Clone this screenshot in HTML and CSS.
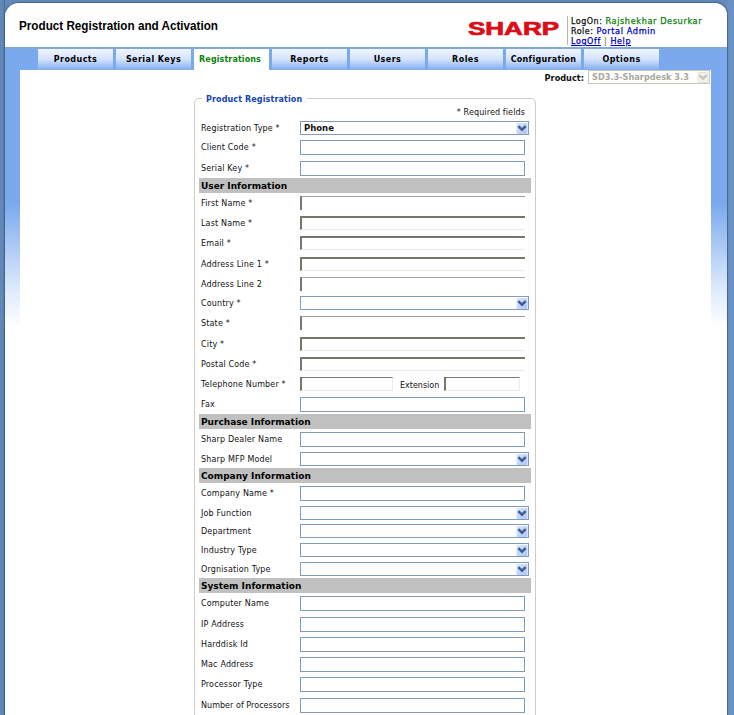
FILE: index.html
```html
<!DOCTYPE html>
<html lang="en">
<head>
<meta charset="utf-8">
<title>Product Registration and Activation</title>
<link rel="stylesheet" href="styles.css">
</head>
<body>
<svg width="0" height="0" class="defs">
  <defs>
    <linearGradient id="btn" x1="0" y1="0" x2="1" y2="1"><stop offset="0" stop-color="#d9e6fe"/><stop offset="1" stop-color="#adc6f7"/></linearGradient>
    <symbol id="drop" viewBox="0 0 11 11"><rect width="11" height="11" rx="1" fill="url(#btn)"/><path d="M1.8 3.2 5.5 6.7 9.2 3.2" fill="none" stroke="#3f5c98" stroke-width="2.5"/></symbol>
    <symbol id="drop-off" viewBox="0 0 11 11"><rect x=".5" y=".5" width="10" height="10" rx="1" fill="#f3f2ea" stroke="#e2e1d8"/><path d="M1.8 3.2 5.5 6.7 9.2 3.2" fill="none" stroke="#c5c4b6" stroke-width="2.3"/></symbol>
  </defs>
</svg>
<div class="shell">
  <header class="top">
    <svg class="title" width="220" height="20"><text x="0" y="13" textLength="199" lengthAdjust="spacingAndGlyphs">Product Registration and Activation</text></svg>
    <svg class="logo" width="93" height="18"><text x="0" y="14.5" textLength="91" lengthAdjust="spacingAndGlyphs">SHARP</text></svg>
    <div class="account">
      <div>LogOn: <b class="green">Rajshekhar Desurkar</b></div>
      <div>Role: <b class="blue">Portal Admin</b></div>
      <div class="links"><a href="#">LogOff</a> <i>|</i> <a href="#">Help</a></div>
    </div>
  </header>
  <nav class="tabs">
    <a>Products</a><a>Serial Keys</a><a class="active">Registrations</a><a>Reports</a><a>Users</a><a>Roles</a><a class="wide">Configuration</a><a>Options</a>
  </nav>
  <main>
    <div class="product"><span>Product:</span><div class="product-select"><span>SD3.3-Sharpdesk 3.3</span><svg width="12" height="11"><use href="#drop-off" width="12" height="11"/></svg></div></div>
    <section class="panel">
      <h2>Product Registration</h2>
      <p class="required">* Required fields</p>
      <div class="row h19"><label>Registration Type *</label><div class="select"><span>Phone</span><svg width="12" height="11"><use href="#drop"/></svg></div></div>
      <div class="row h21"><label>Client Code *</label><div class="field"></div></div>
      <div class="row h17"><label>Serial Key *</label><div class="field"></div></div>
      <h3>User Information</h3>
      <div class="row h20"><label>First Name *</label><div class="inset light"></div></div>
      <div class="row h20"><label>Last Name *</label><div class="inset"></div></div>
      <div class="row h21"><label>Email *</label><div class="inset"></div></div>
      <div class="row h20"><label>Address Line 1 *</label><div class="inset"></div></div>
      <div class="row h19"><label>Address Line 2</label><div class="inset light"></div></div>
      <div class="row h20"><label>Country *</label><div class="select"><span></span><svg width="12" height="11"><use href="#drop"/></svg></div></div>
      <div class="row h21"><label>State *</label><div class="inset light"></div></div>
      <div class="row h20"><label>City *</label><div class="inset"></div></div>
      <div class="row h20"><label>Postal Code *</label><div class="inset"></div></div>
      <div class="row h20"><label>Telephone Number *</label><div class="inset phone"></div><label class="ext">Extension</label><div class="inset ext-field"></div></div>
      <div class="row h17"><label>Fax</label><div class="field"></div></div>
      <h3>Purchase Information</h3>
      <div class="row h20"><label>Sharp Dealer Name</label><div class="field"></div></div>
      <div class="row h16"><label>Sharp MFP Model</label><div class="select"><span></span><svg width="12" height="11"><use href="#drop"/></svg></div></div>
      <h3>Company Information</h3>
      <div class="row h20"><label>Company Name *</label><div class="field"></div></div>
      <div class="row h18"><label>Job Function</label><div class="select"><span></span><svg width="12" height="11"><use href="#drop"/></svg></div></div>
      <div class="row h19"><label>Department</label><div class="select"><span></span><svg width="12" height="11"><use href="#drop"/></svg></div></div>
      <div class="row h19"><label>Industry Type</label><div class="select"><span></span><svg width="12" height="11"><use href="#drop"/></svg></div></div>
      <div class="row h16"><label>Orgnisation Type</label><div class="select"><span></span><svg width="12" height="11"><use href="#drop"/></svg></div></div>
      <h3>System Information</h3>
      <div class="row h21"><label>Computer Name</label><div class="field"></div></div>
      <div class="row h20"><label>IP Address</label><div class="field"></div></div>
      <div class="row h20"><label>Harddisk Id</label><div class="field"></div></div>
      <div class="row h20"><label>Mac Address</label><div class="field"></div></div>
      <div class="row h21"><label>Processor Type</label><div class="field"></div></div>
      <div class="row h20"><label>Number of Processors</label><div class="field"></div></div>
    </section>
  </main>
</div>
</body>
</html>
```
FILE: styles.css
```css
* { box-sizing: border-box; }
body { margin: 0; height: 715px; overflow: hidden; padding: 3px 7px 0 5px; background: linear-gradient(90deg, #6188b8 0 3px, #49698f 5px, #6188b8 5px 726px, #6991c3 728px); font: 8px "DejaVu Sans", sans-serif; color: #111; }
.defs { position: absolute; }
.shell { height: 730px; border-radius: 14px 12px 0 0; box-shadow: 0 0 1px 1px #446489; background: linear-gradient(#7aa9ee 0 200px, #a8c7f4 240px, #dce9fc 285px, #fff 325px); overflow: hidden; }
.top { height: 44px; background: #fff; display: flex; align-items: flex-start; padding: 13px 0 0 14px; }
.title { margin-top: 1px; font: bold 13px "Liberation Sans", sans-serif; fill: #000; }
.logo { margin: 4px 0 0 229px; font: bold 18px "Liberation Sans", sans-serif; fill: #dc0d17; stroke: #dc0d17; stroke-width: .7px; }
.account { margin-left: 6px; border-left: 1px solid #b5b5b5; height: 29px; padding-left: 3px; white-space: nowrap; line-height: 10px; font-size: 8px; letter-spacing: .5px; -webkit-text-stroke: .25px; }
.account div { height: 10px; }
.green { color: #0c820c; }
.blue { color: #0000c8; }
b { font-weight: normal; font-size: 8.2px; letter-spacing: .6px; }
.links a { color: #0000b8; }
.links { letter-spacing: .6px; padding-top: 1px; }
.links i { font-style: normal; color: #888; }
.tabs { height: 23px; background: #7aa9ee; border-top: 2px solid #83a9d8; padding-left: 33px; display: flex; gap: 3px; }
.tabs a { width: 75px; height: 21px; text-align: center; font-weight: bold; font-size: 8px; line-height: 22px; letter-spacing: .45px; color: #000; background: linear-gradient(#f1f6ff, #d3e2fc 50%, #80adf0); white-space: nowrap; }
.tabs a.active { background: #fff; color: #0c820c; font-size: 8px; letter-spacing: .1px; line-height: 21px; height: 22px; padding-right: 3px; }
.tabs a.wide { letter-spacing: .3px; }
main { margin: 0 16px 0 15px; background: #fff; height: 660px; }
.product { height: 14px; display: flex; justify-content: flex-end; align-items: center; font-weight: bold; font-size: 8.2px; gap: 4px; padding-right: 1px; }
.product > span { padding-top: 2px; }
.product-select { width: 122px; height: 14px; border: 1px solid #c9c7ba; display: flex; justify-content: space-between; align-items: center; padding: 0 0 0 3px; color: #aaa99c; font-size: 8.2px; white-space: nowrap; }
.panel { margin: 14px 0 0 174px; width: 342px; height: 640px; border: 1px solid #cfcbc5; border-radius: 5px; padding: 0 4px; }
h2 { margin: -6px 0 0 3px; width: max-content; height: 13px; padding: 0 5px 0 4px; background: #fff; color: #1245b0; font-size: 8px; letter-spacing: .12px; line-height: 13px; }
.required { margin: 0; height: 15px; line-height: 13px; padding-right: 6px; text-align: right; letter-spacing: .12px; }
.row { display: flex; padding-left: 2px; }
.h16 { height: 16px; } .h17 { height: 17px; } .h18 { height: 18px; } .h19 { height: 19px; } .h20 { height: 20px; } .h21 { height: 21px; }
label { width: 99px; line-height: 15px; white-space: nowrap; letter-spacing: .16px; }
.row:last-child label { letter-spacing: .04px; }
.field, .inset { width: 225px; height: 15px; border: 1px solid #7f9db9; }
.inset { height: 14px; border: 0; border-top: 2px solid #77766c; border-left: 2px solid #77766c; border-bottom: 1px solid #ecebe4; }
.inset.light { border-top: 1px solid #a09f98; border-bottom: 0; }
.inset.phone { width: 93px; border-top-width: 1px; border-right: 1px solid #ecebe4; }
label.ext { width: 51px; padding-left: 7px; line-height: 17px; letter-spacing: 0; }
.inset.ext-field { width: 76px; border-top-width: 1px; border-right: 1px solid #ecebe4; }
.select { width: 229px; height: 14px; border: 1px solid #7f9db9; display: flex; justify-content: space-between; align-items: center; padding-left: 3px; font-weight: bold; font-size: 8.5px; }
h3 { margin: 0 0 3px; height: 15px; width: 332px; background: #c0c0c0; font-size: 9px; line-height: 16px; padding-left: 2px; color: #000; }
```
